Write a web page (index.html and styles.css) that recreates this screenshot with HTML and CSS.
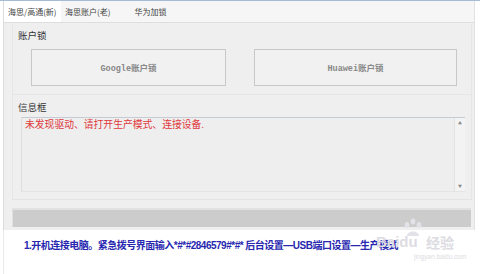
FILE: index.html
```html
<!DOCTYPE html>
<html lang="zh-CN">
<head>
    <meta charset="UTF-8">
    <title>海思/高通 解锁工具</title>
    <link rel="stylesheet" href="styles.css">
</head>
<body>
    <div class="topline"></div>
    <div class="window">
        <div class="tabs">
            <div class="tab active">海思/高通(新)</div>
            <div class="tab">海思账户(老)</div>
            <div class="tab">华为加锁</div>
        </div>
        <div class="page">
            <div class="group">
                <div class="legend">账户锁</div>
                <div class="buttons">
                    <button class="btn">Google账户锁</button>
                    <button class="btn">Huawei账户锁</button>
                </div>
            </div>
            <div class="group info">
                <div class="legend">信息框</div>
                <div class="log">
                    <p class="msg">未发现驱动、请打开生产模式、连接设备.</p>
                    <div class="scroll">
                        <span class="arrow">&#9650;</span>
                        <span class="arrow">&#9660;</span>
                    </div>
                </div>
            </div>
            <div class="progress"></div>
        </div>
    </div>
    <div class="note">
        <p class="step">1.开机连接电脑。紧急拨号界面输入*#*#2846579#*#* 后台设置—USB端口设置—生产模式</p>
        <div class="mark">
            <svg width="22" height="20" viewBox="0 0 22 20">
                <ellipse cx="5" cy="7" rx="2.4" ry="3" fill="#e2e2e8"/>
                <ellipse cx="11" cy="3.5" rx="2.4" ry="3" fill="#e2e2e8"/>
                <ellipse cx="17" cy="7" rx="2.4" ry="3" fill="#e2e2e8"/>
                <path d="M5 18 C5 12 17 12 17 18 Z" fill="#e2e2e8"/>
            </svg>
            <span class="bai">Bai<b>du</b></span>
            <span class="jy">经验</span>
            <span class="url">jingyan.baidu.com</span>
        </div>
    </div>
</body>
</html>
```

FILE: styles.css
```css
*{
    margin: 0;
    padding: 0;
    box-sizing: border-box;
}
body{
    background-color: #ffffff;
    font-family: "Noto Sans CJK SC", "Liberation Sans", sans-serif;
    width: 480px;
    height: 274px;
    overflow: hidden;
}
.topline{
    height: 1px;
    background: #a8bbd4;
}
.window{
    margin-left: 3px;
    width: 472px;
    height: 229px;
    background: #efefef;
    border-left: 1px solid #dcdcdc;
    border-right: 1px solid #e2e2e2;
}
.tabs{
    display: flex;
    height: 22px;
    background: #f6f6f6;
    border-bottom: 1px solid #dedede;
}
.tab{
    font-size: 8px;
    line-height: 22px;
    color: #444;
    padding: 0 6px 0 4px;
    white-space: nowrap;
}
.tab:nth-child(3){
    padding-left: 18px;
}
.tab.active{
    background: #ffffff;
    width: 57px;
}
.page{
    padding: 1px 0 0 8px;
    width: 468px;
}
.group{
    border: 1px solid #e6e6e6;
    border-top: none;
    height: 71px;
}
.legend{
    font-size: 9.5px;
    color: #333;
    line-height: 14px;
    padding: 4px 0 0 5px;
    height: 25px;
}
.buttons{
    display: flex;
    gap: 28px;
    padding-left: 18px;
}
.btn{
    flex: none;
    width: 195px;
    height: 37px;
    background: #f1f1f1;
    border: 1px solid #c8c8c8;
    font-family: "Liberation Mono", "Noto Sans CJK SC", monospace;
    font-size: 8.5px;
    font-weight: bold;
    color: #888;
}
.btn:last-child{
    width: 203px;
}
.info{
    height: 105px;
    border-bottom: 1px solid #e4e4e4;
}
.info .legend{
    height: 22px;
    padding-top: 5px;
}
.log{
    display: flex;
    margin-left: 8px;
    width: 444px;
    height: 75px;
    background: #eeeeef;
    border-top: 1px solid #c6ccd4;
    border-left: 1px solid #dddddd;
    border-bottom: 1px solid #e4e4e4;
}
.msg{
    flex: 1;
    font-size: 9.8px;
    color: #e0383a;
    padding: 0 0 0 3px;
    line-height: 13px;
}
.scroll{
    width: 11px;
    display: flex;
    flex-direction: column;
    justify-content: space-between;
    align-items: center;
    border-left: 1px solid #e2e2e2;
    background: #f3f3f3;
}
.arrow{
    font-size: 4px;
    color: #888;
    line-height: 10px;
}
.progress{
    margin-top: 8px;
    width: 459px;
    height: 19px;
    background: #cccccc;
    border-top: 2px solid #e2e2e2;
    border-left: 1px solid #e0e0e0;
}
.note{
    position: relative;
    margin-left: 3px;
    height: 44px;
    border-left: 1px solid #eaeaea;
}
.step{
    padding: 7px 0 0 20px;
    font-family: "Liberation Sans", "Noto Sans CJK SC", sans-serif;
    font-size: 10px;
    font-weight: bold;
    color: #2727b0;
    letter-spacing: -0.5px;
}
.mark{
    position: absolute;
    left: 372px;
    top: -12px;
    width: 90px;
    height: 44px;
    color: #dcdce2;
}
.mark svg{
    position: absolute;
    left: 26px;
    top: 0;
}
.bai{
    position: absolute;
    left: 0;
    top: 15px;
    font-family: "Liberation Sans", sans-serif;
    font-size: 15px;
    font-weight: bold;
}
.jy{
    position: absolute;
    left: 50px;
    top: 14px;
    font-size: 14px;
    font-weight: bold;
}
.url{
    position: absolute;
    left: 38px;
    top: 35px;
    font-family: "Liberation Sans", sans-serif;
    font-size: 6.5px;
}
```
